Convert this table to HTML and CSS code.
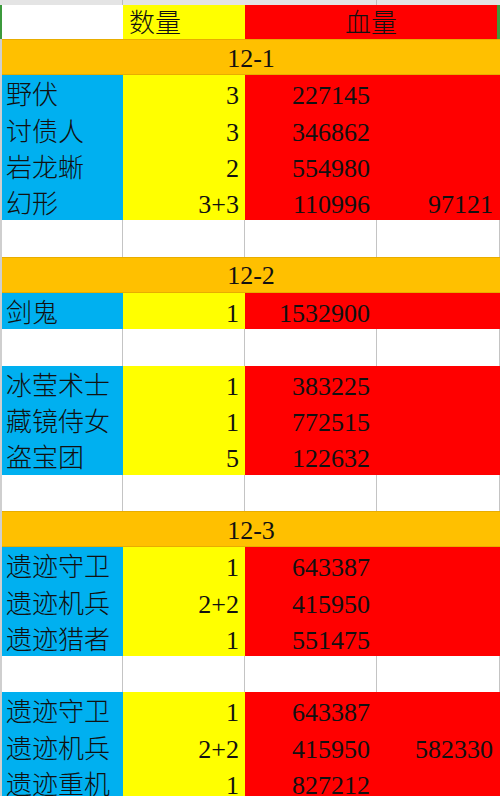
FILE: index.html
```html
<!DOCTYPE html>
<html lang="zh">
<head>
<meta charset="utf-8">
<title>数量 血量</title>
<link rel="stylesheet" href="styles.css">
</head>
<body>
<div class="sheet">
  <div class="colhead"><span class="ch a"></span><span class="ch b"></span><span class="ch c"></span></div>
  <div class="row head">
    <div class="cell blank"></div>
    <div class="cell yel left">数量</div>
    <div class="cell red center span2">血量</div>
  </div>
  <div class="row sec"><div class="cell span4">12-1</div></div>
  <div class="row"><div class="cell blue">野伏</div><div class="cell yel num">3</div><div class="cell red num">227145</div><div class="cell red num"></div></div>
  <div class="row"><div class="cell blue">讨债人</div><div class="cell yel num">3</div><div class="cell red num">346862</div><div class="cell red num"></div></div>
  <div class="row"><div class="cell blue">岩龙蜥</div><div class="cell yel num">2</div><div class="cell red num">554980</div><div class="cell red num"></div></div>
  <div class="row"><div class="cell blue">幻形</div><div class="cell yel num">3+3</div><div class="cell red num">110996</div><div class="cell red num">97121</div></div>
  <div class="row empty"><div class="cell"></div><div class="cell"></div><div class="cell"></div><div class="cell"></div></div>
  <div class="row sec"><div class="cell span4">12-2</div></div>
  <div class="row"><div class="cell blue">剑鬼</div><div class="cell yel num">1</div><div class="cell red num">1532900</div><div class="cell red num"></div></div>
  <div class="row empty"><div class="cell"></div><div class="cell"></div><div class="cell"></div><div class="cell"></div></div>
  <div class="row"><div class="cell blue">冰莹术士</div><div class="cell yel num">1</div><div class="cell red num">383225</div><div class="cell red num"></div></div>
  <div class="row"><div class="cell blue">藏镜侍女</div><div class="cell yel num">1</div><div class="cell red num">772515</div><div class="cell red num"></div></div>
  <div class="row"><div class="cell blue">盗宝团</div><div class="cell yel num">5</div><div class="cell red num">122632</div><div class="cell red num"></div></div>
  <div class="row empty"><div class="cell"></div><div class="cell"></div><div class="cell"></div><div class="cell"></div></div>
  <div class="row sec"><div class="cell span4">12-3</div></div>
  <div class="row"><div class="cell blue">遗迹守卫</div><div class="cell yel num">1</div><div class="cell red num">643387</div><div class="cell red num"></div></div>
  <div class="row"><div class="cell blue">遗迹机兵</div><div class="cell yel num">2+2</div><div class="cell red num">415950</div><div class="cell red num"></div></div>
  <div class="row"><div class="cell blue">遗迹猎者</div><div class="cell yel num">1</div><div class="cell red num">551475</div><div class="cell red num"></div></div>
  <div class="row empty"><div class="cell"></div><div class="cell"></div><div class="cell"></div><div class="cell"></div></div>
  <div class="row"><div class="cell blue">遗迹守卫</div><div class="cell yel num">1</div><div class="cell red num">643387</div><div class="cell red num"></div></div>
  <div class="row"><div class="cell blue">遗迹机兵</div><div class="cell yel num">2+2</div><div class="cell red num">415950</div><div class="cell red num">582330</div></div>
  <div class="row"><div class="cell blue">遗迹重机</div><div class="cell yel num">1</div><div class="cell red num">827212</div><div class="cell red num"></div></div>
</div>
</body>
</html>
```
FILE: styles.css
```css
html, body {
  margin: 0;
  padding: 0;
  background: #ffffff;
  overflow: hidden;
}
.sheet {
  width: 500px;
  height: 796px;
  overflow: hidden;
  font-family: "Liberation Serif", "Noto Sans CJK SC", serif;
  font-size: 26px;
  font-weight: 300;
  color: #111111;
}
.colhead {
  height: 5px;
  display: grid;
  grid-template-columns: 123px 254px 123px;
  background: #e4e4e4;
}
.ch { border-right: 1px solid #bdbdbd; box-sizing: border-box; }
.ch.c { border-right: none; }
.row {
  display: grid;
  grid-template-columns: 121px 122px 132px 123px;
  width: 500px;
  box-sizing: border-box;
  height: 36.3px;
  border-left: 2px solid #cfcfcf;
}
.row.head {
  height: 34px;
  border-left-color: #3c9a3c;
}
.cell {
  display: flex;
  align-items: center;
  padding-top: 6px;
  box-sizing: border-box;
  white-space: nowrap;
  line-height: 1;
  min-width: 0;
}
.head .cell { padding-top: 3px; }
.blank { background: #ffffff; }
.blue { background: #00b0f0; padding-left: 4px; }
.yel { background: #ffff00; }
.red { background: #ff0000; }
.left { padding-left: 6px; }
.center { justify-content: center; }
.num { justify-content: flex-end; padding-right: 6px; }
.red.num { padding-right: 7px; }
.span2 {
  grid-column: span 2;
  border-right: 3px solid #3c9a3c;
}
.span4 {
  grid-column: span 4;
  justify-content: center;
  background: #ffc000;
  border-top: 1px solid #e8ad00;
  border-bottom: 1px solid #e8ad00;
}
.sec .cell { padding-top: 3px; }
.row.empty {
  background: #ffffff;
}
.empty .cell {
  background: transparent;
  border-right: 1px solid #c4c4c4;
  padding: 0;
}
```
